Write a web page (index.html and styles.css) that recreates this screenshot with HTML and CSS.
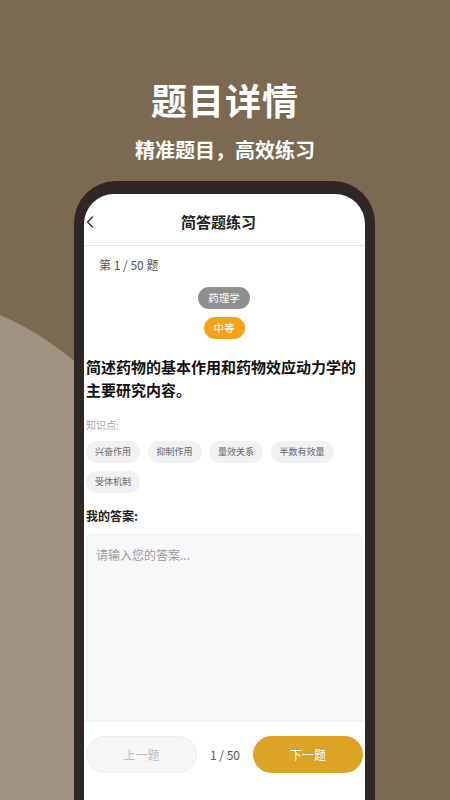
FILE: index.html
```html
<!DOCTYPE html>
<html lang="zh-CN">
<head>
<meta charset="utf-8">
<title>题目详情</title>
<link rel="stylesheet" href="styles.css">
</head>
<body>
<div class="page">
  <div class="hero">
    <h1 class="hero-title">题目详情</h1>
    <p class="hero-sub">精准题目，高效练习</p>
  </div>
  <div class="phone">
    <div class="screen">
      <div class="nav">
        <svg class="back" width="8" height="12" viewBox="0 0 8 12"><path d="M6.5 1 L1.5 6 L6.5 11" fill="none" stroke="#333" stroke-width="1.4" stroke-linecap="round" stroke-linejoin="round"/></svg>
        <div class="nav-title">简答题练习</div>
      </div>
      <div class="content">
        <div class="progress">第 1 / 50 题</div>
        <div class="tags">
          <span class="tag tag-subject">药理学</span>
          <span class="tag tag-level">中等</span>
        </div>
        <div class="question">简述药物的基本作用和药物效应动力学的主要研究内容。</div>
        <div class="kp-label">知识点:</div>
        <div class="chips">
          <span class="chip">兴奋作用</span>
          <span class="chip">抑制作用</span>
          <span class="chip">量效关系</span>
          <span class="chip">半数有效量</span>
          <span class="chip">受体机制</span>
        </div>
        <div class="answer-label">我的答案:</div>
        <textarea class="answer" placeholder="请输入您的答案..."></textarea>
      </div>
      <div class="bottom">
        <button class="btn btn-prev">上一题</button>
        <span class="count">1 / 50</span>
        <button class="btn btn-next">下一题</button>
      </div>
    </div>
  </div>
</div>
</body>
</html>
```
FILE: styles.css
```css
* { box-sizing: border-box; }
html, body { margin: 0; padding: 0; }
body {
  width: 450px;
  height: 800px;
  overflow: hidden;
  background: #7b6a51;
  font-family: "Noto Sans CJK SC", "Noto Sans", sans-serif;
  position: relative;
}
body::before {
  content: "";
  position: absolute;
  left: -421px;
  top: 290px;
  width: 602px;
  height: 602px;
  border-radius: 50%;
  background: #a09381;
  z-index: 0;
}
.page {
  position: relative;
  z-index: 1;
  display: flex;
  flex-direction: column;
}
.hero {
  padding-top: 79px;
  display: flex;
  flex-direction: column;
  align-items: center;
}
.hero-title {
  margin: 0;
  font-size: 36px;
  line-height: 40px;
  font-weight: 700;
  color: #fff;
  letter-spacing: 1px;
}
.hero-sub {
  margin: 19px 0 0;
  font-size: 20px;
  line-height: 24px;
  font-weight: 700;
  color: #fff;
}
.phone {
  margin: 19px 0 0 74px;
  width: 301px;
  height: 660px;
  background: #2f2725;
  border-radius: 42px;
  padding: 13px 10px 0;
}
.screen {
  background: #fff;
  height: 100%;
  border-radius: 30px 30px 0 0;
  overflow: hidden;
  display: flex;
  flex-direction: column;
}
.nav {
  flex: none;
  height: 52px;
  border-bottom: 1px solid #e6e6e6;
  display: flex;
  align-items: center;
  padding: 4px 14px 0 2px;
}
.back { flex: none; }
.nav-title {
  flex: 1;
  text-align: center;
  font-size: 15px;
  font-weight: 700;
  color: #222;
  line-height: 20px;
  margin-left: -8px;
}
.content {
  flex: none;
  padding: 0 3px 0 2px;
  display: flex;
  flex-direction: column;
}
.progress {
  margin-top: 11px;
  padding-left: 13px;
  font-size: 12px;
  line-height: 16px;
  color: #555;
}
.tags {
  margin-top: 14px;
  display: flex;
  flex-direction: column;
  align-items: center;
  gap: 8px;
}
.tag {
  height: 22px;
  line-height: 22px;
  padding: 0 10px;
  border-radius: 11px;
  font-size: 10.5px;
  color: #fff;
}
.tag-subject { background: #8f8f8f; }
.tag-level { background: #f5a31a; }
.question {
  margin-top: 16px;
  font-size: 15px;
  line-height: 23px;
  font-weight: 700;
  color: #111;
}
.kp-label {
  margin-top: 17px;
  font-size: 10px;
  line-height: 14px;
  color: #a8a8a8;
}
.chips {
  margin-top: 9px;
  display: flex;
  flex-wrap: wrap;
  gap: 8px 7.5px;
}
.chip {
  height: 22px;
  line-height: 22px;
  padding: 0 9px;
  border-radius: 11px;
  background: #f1f1f1;
  font-size: 9px;
  color: #666;
}
.answer-label {
  margin-top: 15px;
  font-size: 12px;
  line-height: 16px;
  font-weight: 700;
  color: #222;
}
.answer {
  display: block;
  margin-top: 10px;
  height: 200px;
  width: 100%;
  resize: none;
  background: #f7f8fa;
  border: 1px solid #eceef1;
  border-radius: 6px;
  padding: 11px 9px;
  font-family: inherit;
  font-size: 12px;
  line-height: 17px;
  outline: none;
}
.answer::placeholder { color: #9a9a9a; }
.bottom {
  flex: none;
  position: relative;
  margin-top: -12px;
  background: #fff;
  box-shadow: 0 -1px 2px rgba(0,0,0,0.05);
  display: flex;
  align-items: center;
  justify-content: space-between;
  padding: 14px 2px 14px 2px;
}
.btn {
  width: 111px;
  height: 37px;
  border-radius: 19px;
  border: none;
  font-family: inherit;
  font-size: 12px;
}
.btn-prev {
  background: #f6f6f6;
  border: 1px solid #eeeeee;
  color: #bdbdbd;
}
.btn-next {
  width: 110px;
  background: #dca325;
  color: #fff;
}
.count {
  font-size: 12px;
  color: #555;
}
```
